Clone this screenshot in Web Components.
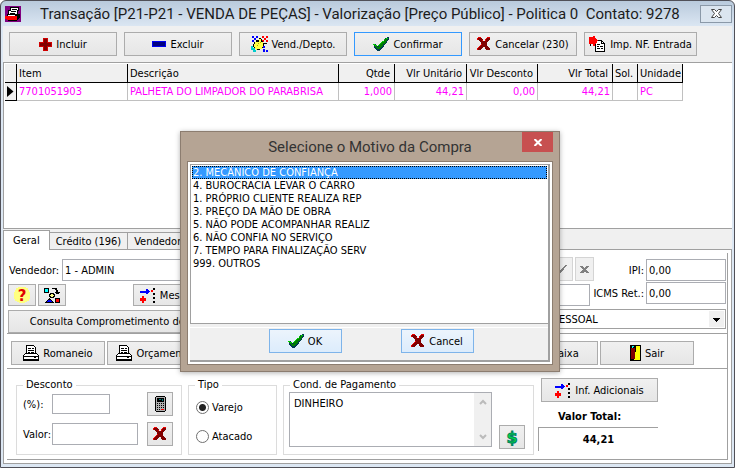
<!DOCTYPE html>
<html lang="pt-BR">
<head>
<meta charset="utf-8">
<title>Transação</title>
<style>
html, body{
  margin: 0;
  min-height: 100%;
  background: #fff;
}
body{
  font: 11px/13px "DejaVu Sans Condensed", "DejaVu Sans", sans-serif;
  color: #000;
}
.area{
  border-right: 1px solid #a0a0a0;
  border-bottom: 1px solid #a0a0a0;
}
.seller{
  display: flex;
  flex-direction: column;
  padding: 3px 1px 0;
}
.line{
  display: flex;
  align-items: flex-end;
}
.line + .line{
  margin-top: 1px;
}
.line .tax{
  --label-width: 56px;
  --field-width: 80px;
  align-self: flex-start;
}
.line:first-child .tax{
  align-self: flex-end;
}
.actions{
  display: flex;
  gap: 2px;
  padding: 7px 33px 3px 4px;
}
.push{
  margin-left: auto;
}
.totals{
  display: flex;
  gap: 6px;
  padding: 9px 9px 4px;
}
.discount{
  display: grid;
  grid-template-columns: 1fr 26px;
  gap: 6px;
  align-items: center;
  --label-width: 30px;
}
.kind{
  display: grid;
  gap: 15px;
  padding: 8px 2px;
}
.payment{
  display: flex;
  gap: 7px;
  align-items: flex-end;
}
.sum{
  width: 120px;
  margin-left: -2px;
  display: flex;
  flex-direction: column;
}
.sum tx-button{
  margin: 0 0 8px 3px;
}
.sum b{
  padding: 0 20px;
}
.sum output{
  margin-top: 4px;
  padding: 5px 0;
  border-top: 1px solid #a0a0a0;
  border-left: 1px solid #a0a0a0;
  text-align: center;
  font-weight: bold;
}
</style>
</head>
<body>
<tx-window caption="Transação [P21-P21 - VENDA DE PEÇAS] - Valorização [Preço Público] - Politica 0  Contato: 9278">
  <tx-toolbar>
    <tx-button icon="plus">Incluir</tx-button>
    <tx-button icon="minus">Excluir</tx-button>
    <tx-button icon="hand">Vend./Depto.</tx-button>
    <tx-button icon="check" active>Confirmar</tx-button>
    <tx-button icon="cross">Cancelar (230)</tx-button>
    <tx-button icon="import">Imp. NF. Entrada</tx-button>
  </tx-toolbar>
  <tx-grid></tx-grid>
  <tx-tabs tabs="Geral|Crédito (196)|Vendedor">
    <div class="area seller">
      <div class="line" style="height:25px">
        <tx-field label="Vendedor:" value="1 - ADMIN" style="--label-width:54px;--field-width:360px"></tx-field>
        <tx-button class="push" icon="checkOff" flat style="width:24px"></tx-button>
        <tx-button icon="crossOff" flat style="width:19px;margin-left:2px"></tx-button>
        <tx-field class="tax" label="IPI:" value="0,00" right style="margin-left:-4px"></tx-field>
      </div>
      <div class="line" style="height:24px">
        <tx-button icon="help" style="width:28px;height:22px"></tx-button>
        <tx-button icon="shapes" style="width:28px;height:22px;margin-left:2px"></tx-button>
        <tx-button icon="merge" style="width:108px;height:22px;margin-left:67px">Mesclar Pedido</tx-button>
        <tx-field class="push" label="" value="" style="--label-width:0px;--field-width:60px"></tx-field>
        <tx-field class="tax" label="ICMS Ret.:" value="0,00" right></tx-field>
      </div>
      <div class="line" style="height:26px">
        <tx-button style="width:226px;height:23px">Consulta Comprometimento de Itens</tx-button>
        <tx-combo class="push" value="PESSOAL" style="width:178px;align-self:flex-start;margin-top:2px"></tx-combo>
      </div>
    </div>
    <div class="area actions">
      <tx-button icon="print" style="width:94px">Romaneio</tx-button>
      <tx-button icon="print" style="width:94px">Orçamento</tx-button>
      <tx-button class="push" icon="check" style="width:86px">Baixa</tx-button>
      <tx-button icon="door" style="width:94px">Sair</tx-button>
    </div>
    <div class="area totals">
      <tx-group legend="Desconto" style="width:166px">
        <div class="discount">
          <tx-field label="(%):" value="" style="--field-width:58px;--field-height:20px"></tx-field>
          <tx-button icon="calc"></tx-button>
          <tx-field label="Valor:" value="" style="--field-width:86px"></tx-field>
          <tx-button icon="cross"></tx-button>
        </div>
      </tx-group>
      <tx-group legend="Tipo" style="width:89px">
        <div class="kind">
          <tx-radio label="Varejo" checked></tx-radio>
          <tx-radio label="Atacado"></tx-radio>
        </div>
      </tx-group>
      <tx-group legend="Cond. de Pagamento" style="width:251px">
        <div class="payment">
          <tx-memo value="DINHEIRO"></tx-memo>
          <tx-button icon="money" style="width:26px"></tx-button>
        </div>
      </tx-group>
      <div class="sum">
        <tx-button icon="merge">Inf. Adicionais</tx-button>
        <b>Valor Total:</b>
        <output>44,21</output>
      </div>
    </div>
  </tx-tabs>
</tx-window>
<tx-dialog caption="Selecione o Motivo da Compra">
  <tx-button slot="buttons" icon="check" hot>OK</tx-button>
  <tx-button slot="buttons" icon="cross" hot>Cancel</tx-button>
</tx-dialog>

<script>
const svg = (w, h, body)=> `<svg width="${w}" height="${h}" viewBox="0 0 ${w} ${h}" shape-rendering="crispEdges" aria-hidden="true">${body}</svg>`

const ICONS = {
  plus: svg(13, 13, `<path fill="#d00000" d="M4 0h5v4h4v5H9v4H4V9H0V4h4z"/><path fill="#800000" d="M5 1h3v4h4v3H8v4H5V8H1V5h4z"/>`),
  minus: svg(14, 6, `<path fill="#0000f0" d="M0 0h14v6H0z"/><path fill="#000080" d="M1 1h12v4H1z"/>`),
  hand: svg(17, 16, `
    <path fill="#00f" d="M1 0h2v2H1zM5 0h2v2H5zM3 2h2v2H3zM1 4h2v2H1zM12 10h2v2h-2zM12 13h2v3h-2zM15 14h2v2h-2z"/>
    <path fill="#f00" d="M11 0h2v2h-2zM15 0h2v2h-2zM13 2h2v2h-2zM11 4h2v2h-2zM15 4h2v2h-2z"/>
    <path fill="#000" d="M8 2h2v1h1v2h1v2h4v1h-3v2h-1v2h-1v1H9v1H5v-1H3v-2H2V8h1V6h2V4h3z"/>
    <path fill="#ff4" d="M8 3h2v3h2v5h-1v2H6v1H5v-1H4v-2H3V8h1V6h4z"/>
    <path fill="#aa0" d="M7 7h1v1H7zM9 6h1v1H9zM6 9h1v1H6z"/>
    <path fill="#0cc" d="M0 10h2v2h2v2h1v2H2v-2H0z"/>`),
  check: svg(16, 14, `
    <path fill="#003c50" d="M2 7h1v1h1v1h2V7h1V6h1V5h1V4h2V2h1V1h2V0h2v3h-1v1h-1v2h-1v1h-1v1h-1v2h-1v1H9v1H8v1H7v1H4v-1H3v-1H2v-1H1V7z"/>
    <path fill="#008000" d="M1 7h1v1h2v2h2V8h1V7h1V6h1V5h2V3h1V2h1V1h2v1h-1v2h-1v2h-1v1h-2v2H9v1H8v1H7v1H4v-1H3v-1H2V9H1z"/>
    <path fill="#00d000" d="M0 7h2v1H0zM2 8h2v1H2zM5 8h1v1H5zM6 7h1v1H6zM7 6h1v1H7zM8 5h1v1H8zM9 4h2v1H9zM11 2h1v1h-1zM13 1h2v1h-2z"/>`),
  cross: svg(14, 14, `
    <path fill="#800000" d="M1 1h4v1h1v2h2V3h1V2h1V1h3v2h-1v1h-1v1h-1v4h1v1h1v1h1v2h-4v-1H8v-2H6v1H5v1H4v1H1v-2h1v-1h1V9h1V5H3V4H2V3H1z"/>
    <path fill="#f00000" d="M1 0h3v1H1zM0 1h1v2H0zM10 0h3v1h-3zM9 1h1v1H9zM8 2h1v2H8zM4 7h1v1H4zM3 8h1v1H3zM2 9h1v1H2zM1 10h1v1H1zM0 11h1v2H0zM5 3h1v1H5z"/>`),
  import: svg(17, 16, `
    <path fill="#fff" stroke="#000" d="M6.500 4.500h6l3 3v8h-9z"/>
    <path fill="none" stroke="#000" d="M12.500 5v2.500h3M8 8.500h3M8 10.500h2M11 10.500h3M8 12.500h3M12 12.500h2"/>
    <path fill="#000" d="M1 1h1v9H1z"/>
    <path fill="#f00" d="M0 1h4V0h2v2h1v1h1v1h1v1H8v2H7v1H6v2H4V8H0z"/>`),
  checkOff: svg(12, 12, `<path fill="#808080" d="M1 6h2l2 2 5-6h2L6 10H4z"/>`),
  crossOff: svg(11, 11, `<path fill="#808080" d="M1 2h3l1.500 2L7 2h3L7 5.500 10 9H7L5.500 7.500 4 9H1l3-3.500z"/>`),
  help: svg(18, 18, `
    <path fill="#ffff80" d="M5 1h8v1h2v2h1v2h1v7h-1v2h-2v1h-2v1H6v-1H4v-1H2v-2H1V6h1V4h1V2h2z"/>
    <text x="9" y="15" text-anchor="middle" font-family="DejaVu Sans" font-weight="bold" font-size="15" fill="#e00000">?</text>`),
  shapes: svg(16, 16, `
    <path fill="#000" d="M0 1h5v5H0zM8 1h3v1H8zM11 1h2v2h1v2h2v1h-1v1h-3V6h-1V5h1V3h-1zM11 11h5v5h-5zM5 11h1v1h1v1h1v1h1v1h1v1H1v-1h1v-1h1v-1h1v-1h1z"/>
    <path fill="#0ff" d="M1 2h3v3H1z"/><path fill="#f00" d="M12 12h3v3h-3z"/><path fill="#00f" d="M4 13h3v1h1v1H3v-1h1z"/>
    <path fill="#ff8" stroke="#000" d="M6.500 6.500h3v1h1v2h-1v1h-3v-1h-1v-2h1z"/>`),
  merge: svg(16, 15, `
    <path fill="#00f" d="M0 3h6V1h2v1h1v1h1v1H9v1H8v1H6V5H0z"/>
    <path fill="#f00" d="M2 8h2v2h2v3H4v2H2v-2H0v-3h2zM11 2h2v2h-2z"/>
    <path fill="#000" d="M13 0h2v2h-2zM13 5h2v2h-2zM13 9h2v2h-2zM13 13h2v2h-2z"/>`),
  print: svg(16, 16, `
    <path fill="#fff" stroke="#000" d="M3.500 8V.500h7l2 2V8"/>
    <path stroke="#000" d="M5 3.500h3M9 3.500h2M5 5.500h6M5 7.500h2M8 7.500h3"/>
    <path fill="#fff" stroke="#000" d="M2.500 8.500h11l2 2v4H.500v-4z"/>
    <path fill="#000" d="M0 11h16v1H0zM0 14h16v2H0zM11 12h2v1h-2z"/>`),
  door: svg(11, 16, `
    <path fill="#000" d="M0 0h11v16H0z"/><path fill="#ff0" d="M6 1h4v14H4v-1h1V7h1z"/>
    <path fill="#800000" d="M1 3h4v11H1z"/><path fill="#0ff" d="M2 1h2v1H2zM2 2h1v1H2z"/>`),
  calc: svg(11, 16, `
    <path fill="#000" d="M1 0h9v1h1v14h-1v1H1v-1H0V1h1z"/><path fill="#b0b0b0" d="M1 1h9v14H1z"/>
    <path fill="#000" d="M2 2h7v4H2z"/><path fill="#008080" d="M4 3h2v1H4zM7 3h1v2H7z"/>
    <path stroke="#000" stroke-dasharray="1 1" d="M2 7.500h7M2 9.500h7M2 11.500h7M2 13.500h4"/><path fill="#f00" d="M6 13h3v1H6z"/>`),
  money: svg(14, 18, `<text x="7" y="15" text-anchor="middle" font-family="DejaVu Sans" font-weight="bold" font-size="16" fill="#00e040" stroke="#008060" stroke-width="1">$</text>`),
  app: svg(16, 16, `
    <path fill="#800080" d="M0 0h16v16H0z"/>
    <path fill="#fff" stroke="#000" d="M5.500 1.500h8v3h-1v4h-9v-4h2z"/>
    <path stroke="#000" d="M7 3.500h5M6 5.500h5M5 7.500h5"/>
    <path fill="#000" d="M2 8h10v2H2zM12 8h3v4h-1v1h-1v1h-1v1H3v-1h9z"/>
    <path fill="#f00" d="M0 10h12v4H2v-1H0z"/><path fill="#fff" d="M3 9h7v1H3z"/>`),
}

const define = (name, html)=> customElements.define(name, class extends HTMLElement{
  constructor(){
    super()
    this.attachShadow({mode: "open"})
  }
  connectedCallback(){
    this.shadowRoot.innerHTML = html(k=> this.getAttribute(k) ?? "", this)
  }
})

define("tx-window", attr=> `
<style>
:host{
  display: flex;
  flex-direction: column;
  box-sizing: border-box;
  min-height: 100vh;
  padding: 0 2px 3px;
  border: 1px solid #505058;
  border-radius: 6px 6px 0 0;
  background: linear-gradient(#b9cadc, #dce7f3 26px);
}
header{
  display: flex;
  align-items: center;
  height: 25px;
  padding-left: 2px;
}
h1{
  flex: 1;
  margin: 0 0 0 19px;
  white-space: pre;
  font: 15px/20px Roboto, sans-serif;
  color: #1c1c1c;
}
button{
  display: grid;
  place-items: center;
  width: 32px;
  height: 18px;
  padding: 0;
  border: 1px solid #8b99a8;
  background: #dbe5ef;
}
main{
  flex: 1;
  display: flex;
  flex-direction: column;
  background: #f0f0f0;
}
</style>
<header>${ICONS.app}<h1>${attr("caption")}</h1>
<button aria-label="Fechar"><svg width="11" height="9" viewBox="0 0 11 9"><path fill="#fff" stroke="#444" d="M.500.500h3l2 2 2-2h3L7.500 4.500l3 4h-3l-2-2-2 2h-3l3-4z"/></svg></button></header>
<main><slot></slot></main>`)

define("tx-toolbar", ()=> `
<style>
:host{
  display: flex;
  gap: 7px;
  padding: 6px;
}
::slotted(tx-button){
  width: 108px;
}
::slotted(tx-button:last-child){
  width: 113px;
}
</style>
<slot></slot>`)

define("tx-button", (attr, el)=> `
<style>
:host{
  display: block;
  flex: none;
  height: 24px;
}
button{
  display: flex;
  align-items: center;
  justify-content: center;
  gap: 4px;
  width: 100%;
  height: 100%;
  padding: 0;
  border: 1px solid #acacac;
  background: linear-gradient(#f0f0f0, #e6e6e6);
  font: inherit;
  color: inherit;
  white-space: nowrap;
}
svg{
  flex: none;
}
:host([active]) button{
  border-color: #3399ff;
}
:host([flat]) button{
  border-color: #d4d4d4;
  background: #f0f0f0;
}
:host([hot]) button{
  border-color: #7eb4ea;
  background: linear-gradient(#ecf4fc, #dcecfc);
}
</style>
<button${el.textContent ? "" : ` aria-label="${attr("icon")}"`}>${ICONS[attr("icon")] ?? ""}<slot></slot></button>`)

const COLUMNS = [
  ["Item", 111, "7701051903"],
  ["Descrição", 211, "PALHETA DO LIMPADOR DO PARABRISA"],
  ["Qtde", 56, "1,000", "num"],
  ["Vlr Unitário", 72, "44,21", "num"],
  ["Vlr Desconto", 71, "0,00", "num"],
  ["Vlr Total", 75, "44,21", "num"],
  ["Sol.", 25, ""],
  ["Unidade", 45, "PC"],
]
define("tx-grid", ()=> `
<style>
:host{
  display: block;
  flex: 1;
  border: 1px solid #a0a0a0;
  border-right: 0;
  background: #fff;
  padding: 1px;
}
table{
  table-layout: fixed;
  width: 0;
  border-spacing: 0;
}
th, td{
  box-sizing: border-box;
  padding: 0 2px;
  text-align: left;
  font-weight: normal;
  white-space: nowrap;
}
th{
  height: 19px;
  background: #f0f0f0;
  border-right: 1px solid #000;
  border-bottom: 1px solid #000;
}
td{
  height: 18px;
  color: #f0f;
  border-right: 1px solid #c0c0c0;
  border-bottom: 1px solid #c0c0c0;
}
td:first-child{
  padding: 0 0 0 2px;
  background: #f0f0f0;
  border-color: #000;
}
td svg{
  display: block;
}
.num{
  text-align: right;
}
th.num{
  padding-right: 4px;
}
</style>
<table>
<colgroup><col style="width:12px">${COLUMNS.map(c=> `<col style="width:${c[1]}px">`).join("")}</colgroup>
<tr><th></th>${COLUMNS.map(c=> `<th class="${c[3] ?? ""}">${c[0]}</th>`).join("")}</tr>
<tr><td><svg width="7" height="11" viewBox="0 0 7 11"><path d="M0 0l6.500 5.500L0 11z"/></svg></td>${COLUMNS.map(c=> `<td class="${c[3] ?? ""}">${c[2]}</td>`).join("")}</tr>
</table>`)

define("tx-tabs", attr=> `
<style>
nav{
  display: flex;
  align-items: flex-end;
  height: 20px;
}
button{
  height: 17px;
  padding: 0 6px;
  border: 1px solid #a0a0a0;
  border-width: 1px 1px 0 0;
  background: #f0f0f0;
  font: inherit;
  color: inherit;
}
button[aria-selected=true]{
  height: 20px;
  margin-bottom: -1px;
  padding: 0 9px 1px;
  border-left-width: 1px;
  background: #fff;
  position: relative;
}
section{
  padding: 3px;
  border: 1px solid #a0a0a0;
  background: #fff;
}
</style>
<nav role="tablist">${attr("tabs").split("|").map((t, i)=> `<button role="tab" aria-selected="${i === 0}">${t}</button>`).join("")}</nav>
<section role="tabpanel"><slot></slot></section>`)

define("tx-field", attr=> `
<style>
:host{
  display: flex;
  align-items: center;
  flex: none;
}
label{
  width: var(--label-width);
  box-sizing: border-box;
  padding-left: 1px;
  white-space: nowrap;
}
:host([right]) label{
  text-align: right;
  padding-right: 2px;
}
input{
  box-sizing: border-box;
  width: var(--field-width);
  height: var(--field-height, 22px);
  padding: 0 2px;
  border: 1px solid #abadb3;
  background: #fff;
  font: inherit;
  color: inherit;
}
</style>
<label for="f">${attr("label")}</label><input id="f" value="${attr("value")}">`)

define("tx-combo", attr=> `
<style>
:host{
  display: grid;
  align-items: center;
}
select, svg{
  grid-area: 1 / 1;
}
select{
  appearance: none;
  width: 100%;
  height: 20px;
  padding: 0 4px;
  border: 1px solid #a0a0a0;
  border-radius: 0;
  background: #fff;
  font: inherit;
  color: inherit;
}
svg{
  justify-self: end;
  margin-right: 2px;
  pointer-events: none;
}
</style>
<select aria-label="Tipo de uso"><option>${attr("value")}</option></select>
${svg(15, 16, `<path fill="#f0f0f0" d="M0 0h15v16H0z"/><path d="M4 7h7v1h-1v1H9v1H8v1H7v-1H6V9H5V8H4z"/>`)}`)

define("tx-group", attr=> `
<style>
fieldset{
  box-sizing: border-box;
  height: 77px;
  margin: 0;
  padding: 0 8px 0 5px;
  border: 1px solid #dcdcdc;
  min-width: 0;
}
legend{
  height: 14px;
  margin-left: 1px;
  padding: 0 3px;
}
</style>
<fieldset><legend>${attr("legend")}</legend><slot></slot></fieldset>`)

define("tx-radio", (attr, el)=> `
<style>
:host{
  display: block;
}
label{
  display: flex;
  align-items: center;
  gap: 3px;
  height: 14px;
}
input{
  appearance: none;
  box-sizing: border-box;
  width: 13px;
  height: 13px;
  margin: 0;
  border: 1px solid #707070;
  border-radius: 50%;
  background: #fff;
}
input:checked{
  background: radial-gradient(circle, #222 3px, #fff 4px);
}
</style>
<label><input type="radio"${el.hasAttribute("checked") ? " checked" : ""}>${attr("label")}</label>`)

define("tx-memo", attr=> `
<style>
:host{
  display: flex;
  flex: 1;
  box-sizing: border-box;
  height: 55px;
  margin-bottom: 2px;
  border: 1px solid #abadb3;
}
textarea{
  flex: 1;
  min-width: 0;
  padding: 4px;
  border: 0;
  resize: none;
  overflow: hidden;
  background: #fff;
  font: inherit;
  color: inherit;
}
.bar{
  display: flex;
  flex-direction: column;
  justify-content: space-between;
  align-items: center;
  width: 17px;
  padding: 6px 0;
  background: #f0f0f0;
}
</style>
<textarea aria-label="Condição">${attr("value")}</textarea>
<div class="bar">
<svg width="8" height="6" viewBox="0 0 8 6"><path fill="none" stroke="#bbb" stroke-width="2" d="M1 5l3-3 3 3"/></svg>
<svg width="8" height="6" viewBox="0 0 8 6"><path fill="none" stroke="#bbb" stroke-width="2" d="M1 1l3 3 3-3"/></svg>
</div>`)

const REASONS = [
  "2. MECÂNICO DE CONFIANÇA",
  "4. BUROCRACIA LEVAR O CARRO",
  "1. PRÓPRIO CLIENTE REALIZA REP",
  "3. PREÇO DA MÃO DE OBRA",
  "5. NÃO PODE ACOMPANHAR REALIZ",
  "6. NÃO CONFIA NO SERVIÇO",
  "7. TEMPO PARA FINALIZAÇÃO SERV",
  "999. OUTROS",
]
define("tx-dialog", attr=> `
<style>
:host{
  position: absolute;
  left: 180px;
  top: 131px;
  width: 380px;
  box-sizing: border-box;
  padding: 0 6px 6px;
  border: 1px solid #8c7d70;
  background: #b5a494;
  box-shadow: 0 1px 5px rgba(0,0,0,0.3);
}
header{
  display: grid;
  grid-template-columns: 1fr 31px;
  height: 29px;
}
h2{
  margin: 0;
  padding-left: 31px;
  text-align: center;
  font: 15px/30px Roboto, sans-serif;
  color: #333;
}
.close{
  display: grid;
  place-items: center;
  height: 20px;
  padding: 0;
  border: 0;
  background: #c75050;
}
.client{
  padding: 2px;
  border: 1px solid #8c7d70;
  background: #fff;
}
.body{
  border-right: 2px solid #a0a0a0;
  border-bottom: 2px solid #a0a0a0;
  background: #f0f0f0;
}
select{
  display: block;
  box-sizing: border-box;
  width: 100%;
  height: 160px;
  padding: 1px;
  border: 1px solid #a0a0a0;
  border-right: 0;
  border-radius: 0;
  outline: 0;
  overflow: hidden;
  background: #fff;
  font: inherit;
}
option{
  height: 13px;
  min-height: 13px;
  line-height: 13px;
  padding: 0 1px;
  color: #000;
}
option:checked{
  background: #39f linear-gradient(#39f, #39f);
  -webkit-text-fill-color: #fff;
  outline: 1px dotted #000;
  outline-offset: -1px;
}
footer{
  display: flex;
  justify-content: center;
  gap: 59px;
  margin-top: 3px;
  padding: 1px 0 7px 4px;
  border-top: 1px solid #fff;
}
::slotted(tx-button){
  width: 73px;
}
</style>
<header><h2>${attr("caption")}</h2>
<button class="close" aria-label="Fechar"><svg width="8" height="7" viewBox="0 0 8 7"><path stroke="#fff" stroke-width="2" d="M.500 0l7 7M7.500 0l-7 7"/></svg></button></header>
<div class="client"><div class="body">
<select size="12" aria-label="${attr("caption")}">${REASONS.map((r, i)=> `<option${i ? "" : " selected"}>${r}</option>`).join("")}</select>
<footer><slot name="buttons"></slot></footer>
</div></div>`)
</script>
</body>
</html>
